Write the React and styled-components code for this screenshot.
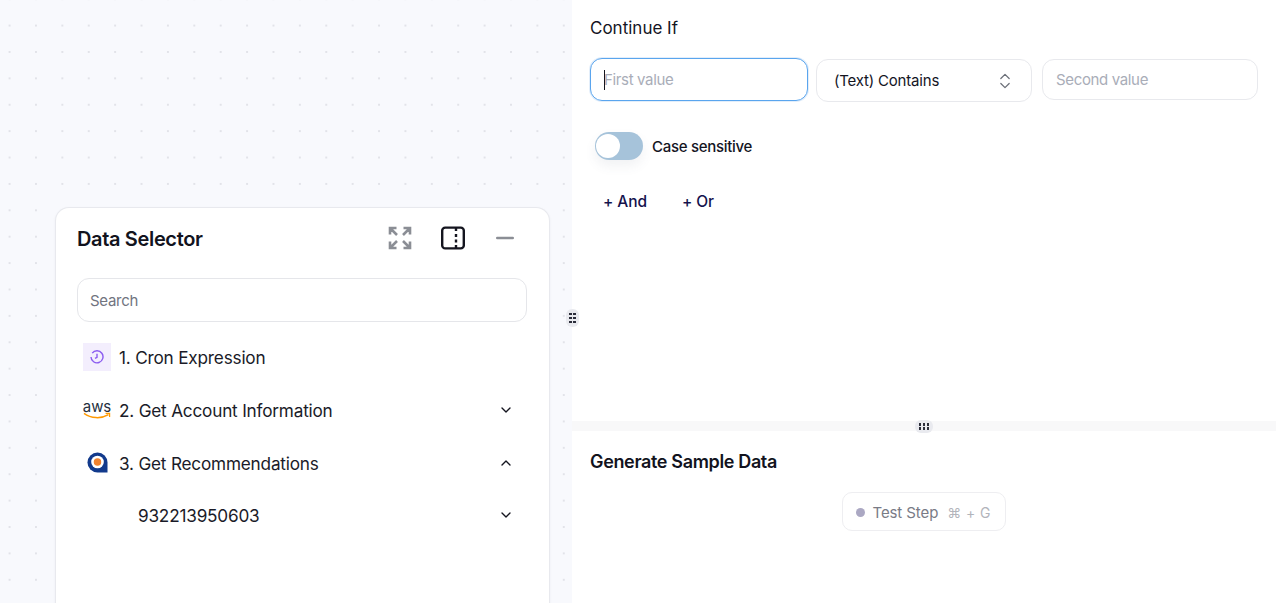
import React from 'react';
import styled, { createGlobalStyle } from 'styled-components';
import { ChevronDown, ChevronUp, ChevronsUpDown } from 'lucide-react';

const Global = createGlobalStyle`
  html, body { margin: 0; padding: 0; height: 100%; overflow: hidden; background: #fff; }
  body { font-family: "Inter", "Liberation Sans", sans-serif; color: #14151f; }
  * { box-sizing: border-box; }
  input::placeholder { color: #a9adb8; opacity: 1; }
`;

const Page = styled.div`
  width: 1276px;
  height: 603px;
  display: grid;
  grid-template-columns: 572px 1fr;
  position: relative;
  overflow: hidden;
`;

const Canvas = styled.div`
  background-color: #f8f9fd;
  background-image: radial-gradient(circle at 1px 1px, #e2e3e9 1px, transparent 1.2px);
  background-size: 26.4px 26.4px;
  background-position: 8.6px -1.8px;
  padding: 207px 22px 0 55px;
  display: flex;
  position: relative;
`;

const Card = styled.div`
  flex: 1;
  background: #fff;
  border: 1px solid #e8e9ee;
  border-bottom: 0;
  border-radius: 14px 14px 0 0;
  padding: 0 22px 0 21px;
  box-shadow: 0 1px 3px rgba(30, 30, 60, 0.05);
`;

const CardHead = styled.div`
  height: 60px;
  display: flex;
  align-items: center;
  padding-right: 13px;
`;

const CardTitle = styled.h2`
  margin: 2px 0 0;
  flex: 1;
  font-size: 20px;
  font-weight: 600;
  letter-spacing: -0.35px;
  color: #12131d;
`;

const HeadIcons = styled.div`
  display: flex;
  align-items: center;
  gap: 29px;
`;

const SearchBox = styled.input`
  display: block;
  width: 100%;
  height: 44px;
  margin: 10px 0 9px;
  border: 1px solid #e5e6ea;
  border-radius: 12px;
  padding: 0 12px;
  font: 400 15px "Inter", sans-serif;
  letter-spacing: -0.3px;
  outline: none;
  &::placeholder { color: #71747f; }
`;

const Row = styled.div`
  height: 52.7px;
  display: flex;
  align-items: center;
  padding-left: ${p => p.$indent || 6}px;
  padding-right: 13px;
  gap: 8px;
`;

const RowIcon = styled.div`
  width: 28px;
  height: 28px;
  flex: none;
  display: flex;
  flex-direction: column;
  align-items: center;
  justify-content: center;
  background: ${p => p.$bg || 'transparent'};
`;

const RowLabel = styled.span`
  flex: 1;
  margin-top: 1px;
  font-size: 17.2px;
  font-weight: 400;
  letter-spacing: -0.2px;
  color: #1a1b28;
  white-space: nowrap;
`;

const AwsText = styled.span`
  font: 400 15px/11px "Inter", sans-serif;
  letter-spacing: -0.1px;
  color: #252f3e;
`;

const Side = styled.div`
  display: flex;
  flex-direction: column;
  background: #fff;
`;

const TopPanel = styled.div`
  height: 421px;
  padding: 16px 18px 0 18px;
`;

const PanelTitle = styled.div`
  font-size: 17px;
  line-height: 24px;
  color: #14151f;
`;

const Fields = styled.div`
  display: grid;
  grid-template-columns: 218px 216px 218px;
  column-gap: 8px;
  align-items: start;
  margin-top: 18px;
`;

const FieldWrap = styled.div`
  position: relative;
`;

const Field = styled.input`
  display: block;
  width: ${p => (p.$second ? '216px' : '100%')};
  height: ${p => (p.$focused ? 43 : 41)}px;
  margin-top: ${p => (p.$focused ? 0 : 1)}px;
  margin-left: ${p => (p.$second ? 2 : 0)}px;
  border: ${p => (p.$focused ? '1.5px solid #5aa5ee' : '1px solid #e8e9ed')};
  border-radius: 12px;
  padding: 0 13px;
  font: 400 15px "Inter", sans-serif;
  letter-spacing: -0.35px;
  outline: none;
  box-shadow: ${p => (p.$focused ? '0 0 0 1px #e3eefa' : 'none')};
`;

const Caret = styled.span`
  position: absolute;
  left: 14px;
  top: 12px;
  width: 1px;
  height: 20px;
  background: #14151f;
`;

const SelectBox = styled.div`
  height: 43px;
  margin-top: 1px;
  border: 1px solid #e8e9ed;
  border-radius: 12px;
  display: flex;
  align-items: center;
  justify-content: space-between;
  padding: 0 16px 0 17px;
  font-size: 15px;
  letter-spacing: -0.2px;
  color: #14151f;
  svg { color: #6b6f78; }
`;

const ToggleRow = styled.div`
  display: flex;
  align-items: center;
  gap: 9px;
  margin: 30px 0 0 5px;
`;

const Toggle = styled.div`
  width: 48px;
  height: 28px;
  border-radius: 14px;
  background: #a6c3da;
  padding: 2px 2px 2px 1px;
  box-shadow: 0 6px 12px rgba(80, 90, 110, 0.08);
`;

const Thumb = styled.div`
  width: 24px;
  height: 24px;
  border-radius: 50%;
  background: #fff;
`;

const ToggleLabel = styled.span`
  font-size: 15px;
  font-weight: 500;
  letter-spacing: -0.3px;
  color: #14151f;
`;

const Actions = styled.div`
  display: flex;
  gap: 35px;
  margin: 32px 0 0 13px;
`;

const ActionLink = styled.span`
  font-size: 15.5px;
  font-weight: 500;
  letter-spacing: -0.1px;
  color: #15124d;
`;

const Divider = styled.div`
  height: 10px;
  background: #f8f8f9;
  position: relative;
`;

const GripV = styled.div`
  position: absolute;
  left: 566px;
  top: 309px;
  width: 13px;
  height: 18px;
  border-radius: 6px;
  background: #e9eaef;
  display: grid;
  grid-template-columns: 2.5px 2.5px;
  gap: 1.5px;
  place-content: center;
`;

const GripH = styled.div`
  position: absolute;
  left: 343px;
  top: -1px;
  width: 18px;
  height: 13px;
  border-radius: 6px;
  background: #e9eaef;
  display: grid;
  grid-template-columns: 2.5px 2.5px 2.5px;
  gap: 1.5px;
  place-content: center;
`;

const GripDot = styled.i`
  display: block;
  width: 2.5px;
  height: 2.5px;
  background: #2b2d3a;
`;

const BottomPanel = styled.div`
  flex: 1;
  padding: 19px 18px 0 18px;
`;

const SectionTitle = styled.h3`
  margin: 0;
  font-size: 18px;
  line-height: 24px;
  font-weight: 600;
  letter-spacing: -0.35px;
  color: #12131d;
`;

const TestWrap = styled.div`
  display: flex;
  justify-content: center;
  margin-top: 18px;
  padding-right: 1px;
`;

const TestButton = styled.div`
  width: 164px;
  height: 39px;
  border: 1px solid #eeeef1;
  border-radius: 10px;
  display: flex;
  align-items: center;
  padding: 1px 0 0 13px;
  font-size: 15px;
  letter-spacing: -0.1px;
  color: #797b86;
`;

const StatusDot = styled.span`
  width: 9px;
  height: 9px;
  border-radius: 50%;
  background: #aba8c3;
  margin-right: 8px;
`;

const Shortcut = styled.span`
  margin-left: 9px;
  font-size: 14px;
  letter-spacing: 0.4px;
  color: #b2b4bb;
`;

const ExpandIcon = () => (
  <svg width="24" height="24" viewBox="0 0 24 24" fill="none" stroke="#8b8e95" strokeWidth="2.6">
    <path d="M2 8.5V2h6.5M2 2l7 7M15.5 2H22v6.5M22 2l-7 7M2 15.5V22h6.5M2 22l7-7M15.5 22H22v-6.5M22 22l-7-7" />
  </svg>
);

const PanelIcon = () => (
  <svg width="24" height="24" viewBox="0 0 24 24" fill="none" stroke="#14151f" strokeWidth="2.4">
    <rect x="1.2" y="1.6" width="21.6" height="20.8" rx="3" />
    <path d="M15 1.6v3.5M15 8v3M15 13.5v3M15 19v3.4" />
  </svg>
);

const MinusIcon = () => (
  <svg width="20" height="4" viewBox="0 0 20 4">
    <rect x="2" width="18" height="2.6" y="0.7" rx="1.2" fill="#8b8e95" />
  </svg>
);

const ClockIcon = () => (
  <svg width="14" height="14" viewBox="0 0 14 14" fill="none" stroke="#8b5cf0" strokeWidth="1.4">
    <path d="M2.2 3.2A6 6 0 1 1 1 7" />
    <path d="M7 3.8V7.4L5 8.4" />
  </svg>
);

const AwsSmile = () => (
  <svg width="28" height="8" viewBox="0 0 28 8" fill="none" stroke="#f90" strokeWidth="1.5">
    <path d="M1 1.4C8 6.6 18 7 25.5 2.6" />
    <path d="M22.6 1.4h4v3.6" strokeWidth="1.2" />
  </svg>
);

const QLogo = () => (
  <svg width="21" height="21" viewBox="0 0 22 22">
    <path d="M11 0.5a10.5 10.5 0 0 1 10.5 10.5v10.5H11A10.5 10.5 0 0 1 11 0.5z" fill="#123a8c" />
    <circle cx="11" cy="10.5" r="6.6" fill="#fff" />
    <circle cx="11" cy="10.5" r="3.9" fill="#f0822e" />
  </svg>
);

function Grip({ count, Box }) {
  return (
    <Box>
      {Array.from({ length: count }).map((_, i) => <GripDot key={i} />)}
    </Box>
  );
}

export default function App() {
  return (
    <Page>
      <Global />
      <Canvas>
        <Card>
          <CardHead>
            <CardTitle>Data Selector</CardTitle>
            <HeadIcons>
              <ExpandIcon />
              <PanelIcon />
              <MinusIcon />
            </HeadIcons>
          </CardHead>
          <SearchBox placeholder="Search" />
          <Row>
            <RowIcon $bg="#f3eefd"><ClockIcon /></RowIcon>
            <RowLabel>1. Cron Expression</RowLabel>
          </Row>
          <Row>
            <RowIcon><AwsText>aws</AwsText><AwsSmile /></RowIcon>
            <RowLabel>2. Get Account Information</RowLabel>
            <ChevronDown size={16} strokeWidth={2} />
          </Row>
          <Row>
            <RowIcon><QLogo /></RowIcon>
            <RowLabel>3. Get Recommendations</RowLabel>
            <ChevronUp size={16} strokeWidth={2} />
          </Row>
          <Row $indent={61}>
            <RowLabel>932213950603</RowLabel>
            <ChevronDown size={16} strokeWidth={2} />
          </Row>
        </Card>
      </Canvas>
      <Side>
        <TopPanel>
          <PanelTitle>Continue If</PanelTitle>
          <Fields>
            <FieldWrap>
              <Field $focused placeholder="First value" />
              <Caret />
            </FieldWrap>
            <SelectBox>
              (Text) Contains
              <ChevronsUpDown size={20} strokeWidth={1.5} />
            </SelectBox>
            <Field $second placeholder="Second value" />
          </Fields>
          <ToggleRow>
            <Toggle><Thumb /></Toggle>
            <ToggleLabel>Case sensitive</ToggleLabel>
          </ToggleRow>
          <Actions>
            <ActionLink>+ And</ActionLink>
            <ActionLink>+ Or</ActionLink>
          </Actions>
        </TopPanel>
        <Divider>
          <Grip count={6} Box={GripH} />
        </Divider>
        <BottomPanel>
          <SectionTitle>Generate Sample Data</SectionTitle>
          <TestWrap>
            <TestButton>
              <StatusDot />
              Test Step
              <Shortcut>⌘ + G</Shortcut>
            </TestButton>
          </TestWrap>
        </BottomPanel>
      </Side>
      <Grip count={6} Box={GripV} />
    </Page>
  );
}
